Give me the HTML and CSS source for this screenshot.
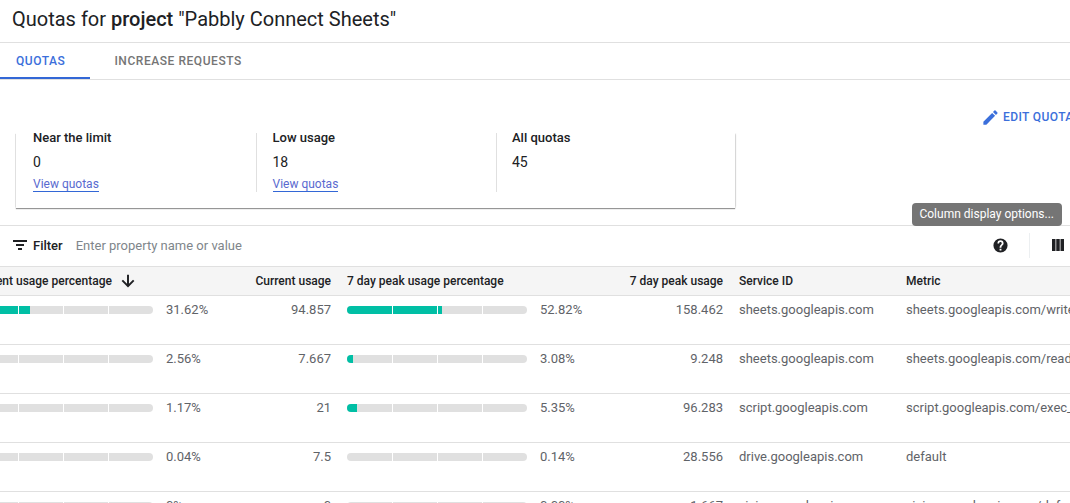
FILE: index.html
```html
<!DOCTYPE html>
<html lang="en">
<head>
<meta charset="utf-8">
<title>Quotas</title>
<link rel="stylesheet" href="styles.css">
</head>
<body>
<h1 class="title">Quotas for <strong>project</strong> "Pabbly Connect Sheets"</h1>
<nav class="tabs">
  <a class="tab tab-active">QUOTAS</a>
  <a class="tab">INCREASE REQUESTS</a>
</nav>
<div class="actions">
  <a class="edit">
    <svg class="edit-icon" viewBox="0 0 24 24"><path fill="currentColor" d="M3 17.25V21h3.75L17.81 9.94l-3.75-3.75L3 17.25zM20.71 7.04a1 1 0 0 0 0-1.41l-2.34-2.34a1 1 0 0 0-1.41 0l-1.83 1.83 3.75 3.75 1.83-1.83z"/></svg>
    EDIT QUOTAS
  </a>
</div>
<section class="summary">
  <div class="stat">
    <div class="stat-label">Near the limit</div>
    <div class="stat-value">0</div>
    <a class="stat-link">View quotas</a>
  </div>
  <div class="stat">
    <div class="stat-label">Low usage</div>
    <div class="stat-value">18</div>
    <a class="stat-link">View quotas</a>
  </div>
  <div class="stat stat-last">
    <div class="stat-label">All quotas</div>
    <div class="stat-value">45</div>
  </div>
</section>
<div class="filter">
  <svg class="filter-icon" viewBox="0 0 14 10"><path fill="currentColor" d="M0 0h14v2H0zM3 4h8v2H3zM5 8h4v2H5z"/></svg>
  <span class="filter-label">Filter</span>
  <span class="filter-hint">Enter property name or value</span>
  <svg class="help-icon" viewBox="0 0 24 24"><path fill="currentColor" d="M12 2a10 10 0 1 0 0 20 10 10 0 0 0 0-20zm1.3 17h-2.6v-2.5h2.6V19zm1.9-7.6-.9.9c-.8.8-1 1.3-1 2.7h-2.6v-.6c0-1.1.45-2.1 1.17-2.83l1.24-1.26A1.9 1.9 0 1 0 10 9H7.7a4.3 4.3 0 1 1 8.6 0c0 .9-.5 1.8-1.1 2.4z"/></svg>
  <span class="filter-sep"></span>
  <svg class="cols-icon" viewBox="0 0 12 12"><path fill="currentColor" d="M0 0h3.5v12H0zM4.25 0h3.5v12h-3.5zM8.5 0H12v12H8.5z"/></svg>
  <div class="tooltip">Column display options...</div>
</div>
<div class="table">
  <div class="row row-head">
    <div class="head-sort">Current usage percentage
      <svg class="sort-icon" viewBox="0 0 24 24"><path fill="currentColor" d="M20.5 12l-1.8-1.8-5.4 5.4V3.5h-2.6v12.1l-5.4-5.4L3.5 12l8.5 8.5 8.5-8.5z"/></svg>
    </div>
    <div class="num">Current usage</div>
    <div>7 day peak usage percentage</div>
    <div class="num">7 day peak usage</div>
    <div>Service ID</div>
    <div>Metric</div>
  </div>
  <div class="row">
    <div class="usage"><div class="bar"><div class="bar-fill" style="width:31.62%"></div></div><span>31.62%</span></div>
    <div class="num">94.857</div>
    <div class="usage"><div class="bar"><div class="bar-fill" style="width:52.82%"></div></div><span>52.82%</span></div>
    <div class="num">158.462</div>
    <div>sheets.googleapis.com</div>
    <div>sheets.googleapis.com/write_requests</div>
  </div>
  <div class="row">
    <div class="usage"><div class="bar"><div class="bar-fill" style="width:2.56%"></div></div><span>2.56%</span></div>
    <div class="num">7.667</div>
    <div class="usage"><div class="bar"><div class="bar-fill" style="width:3.08%"></div></div><span>3.08%</span></div>
    <div class="num">9.248</div>
    <div>sheets.googleapis.com</div>
    <div>sheets.googleapis.com/read_requests</div>
  </div>
  <div class="row">
    <div class="usage"><div class="bar"><div class="bar-fill" style="width:1.17%"></div></div><span>1.17%</span></div>
    <div class="num">21</div>
    <div class="usage"><div class="bar"><div class="bar-fill" style="width:5.35%"></div></div><span>5.35%</span></div>
    <div class="num">96.283</div>
    <div>script.googleapis.com</div>
    <div>script.googleapis.com/exec_requests</div>
  </div>
  <div class="row">
    <div class="usage"><div class="bar"></div><span>0.04%</span></div>
    <div class="num">7.5</div>
    <div class="usage"><div class="bar"></div><span>0.14%</span></div>
    <div class="num">28.556</div>
    <div>drive.googleapis.com</div>
    <div>default</div>
  </div>
  <div class="row">
    <div class="usage"><div class="bar"></div><span>0%</span></div>
    <div class="num">0</div>
    <div class="usage"><div class="bar"></div><span>0.00%</span></div>
    <div class="num">1.667</div>
    <div>vision.googleapis.com</div>
    <div>vision.googleapis.com/default</div>
  </div>
</div>
</body>
</html>
```
FILE: styles.css
```css
html, body {
  margin: 0;
  height: 503px;
  overflow: hidden;
  background: #fff;
}
body {
  font-family: Roboto, "Liberation Sans", sans-serif;
  font-size: 13px;
  color: #202124;
}
.title {
  margin: 0;
  height: 43px;
  padding-left: 12px;
  box-sizing: border-box;
  font-size: 20px;
  font-weight: 400;
  line-height: 39px;
  border-bottom: 1px solid #e0e0e0;
}
.title strong { font-weight: 500; }
.tabs {
  display: flex;
  height: 37px;
  box-sizing: border-box;
  border-bottom: 1px solid #e0e0e0;
}
.tab {
  font-size: 12px;
  font-weight: 500;
  line-height: 36px;
  letter-spacing: 0.55px;
  color: #757575;
  padding: 0 24px;
}
.tab:first-child { padding: 0 25px 0 16px; }
.tab-active {
  color: #3b6fdb;
  height: 36px;
  box-sizing: border-box;
  border-bottom: 2px solid #3367d6;
}
.actions {
  height: 53px;
  box-sizing: border-box;
  display: flex;
  padding: 28px 0 0 981px;
  white-space: nowrap;
}
.edit {
  display: flex;
  align-items: center;
  gap: 3px;
  height: 18px;
  font-size: 12px;
  font-weight: 500;
  letter-spacing: 0.4px;
  color: #3b6fdb;
}
.edit-icon { width: 19px; height: 19px; flex: none; }
.summary {
  display: flex;
  width: 719px;
  height: 75px;
  margin-left: 16px;
  box-sizing: border-box;
  background: #fff;
  box-shadow: 0 1px 1px rgba(0,0,0,.4), 1px 0 2px -1px rgba(0,0,0,.3), -1px 0 1px -1px rgba(0,0,0,.35);
  clip-path: inset(0 -4px -4px -4px);
}
.stat {
  width: 240.5px;
  height: 59px;
  padding-left: 16px;
  box-sizing: border-box;
  border-right: 1px solid #e0e0e0;
}
.stat:first-child { padding-left: 17px; }
.stat-last { border-right: 0; padding-left: 15px; width: 238px; }
.stat-label {
  font-size: 13px;
  font-weight: 500;
  line-height: 10px;
  color: #202124;
}
.stat-value {
  font-size: 14px;
  line-height: 16px;
  margin-top: 11px;
}
.stat-link {
  display: inline-block;
  font-size: 12px;
  line-height: 14px;
  margin-top: 7px;
  color: #5a6acf;
  border-bottom: 1px solid #3367d6;
}
.filter {
  position: relative;
  display: flex;
  align-items: center;
  height: 41px;
  margin-top: 17px;
  box-sizing: border-box;
  border-top: 1px solid #e0e0e0;
  padding: 0 0 2px 13px;
}
.filter-icon { width: 14px; height: 10px; margin-right: 6px; flex: none; }
.filter-label { font-size: 13px; font-weight: 500; margin-right: 13px; }
.filter-hint { font-size: 13px; color: #80868b; }
.help-icon { width: 17px; height: 17px; margin-left: auto; flex: none; }
.filter-sep {
  width: 1px;
  height: 25px;
  background: #eceff1;
  margin: 0 22px 0 20px;
}
.cols-icon { width: 12px; height: 12px; margin-right: 6px; flex: none; }
.tooltip {
  position: absolute;
  right: 8px;
  top: -23px;
  height: 23px;
  padding: 0 8px 0 7.5px;
  border-radius: 4px;
  background: #757575;
  color: #fff;
  font-size: 12px;
  line-height: 22px;
  white-space: nowrap;
}
.table {
  margin-left: -27px;
  width: 1400px;
}
.row {
  display: grid;
  grid-template-columns: 240px 102px 250px 110px 151px 400px;
  column-gap: 16px;
  height: 49px;
  box-sizing: border-box;
  padding-top: 6px;
  border-bottom: 1px solid #e0e0e0;
  font-size: 13px;
  line-height: 16px;
  color: #5f6368;
  white-space: nowrap;
}
.row-head {
  height: 30px;
  padding-top: 0;
  align-items: center;
  background: #f5f5f5;
  border-top: 1px solid #e0e0e0;
  font-size: 12px;
  font-weight: 500;
  color: #202124;
}
.head-sort { display: flex; align-items: center; }
.sort-icon { width: 18px; height: 18px; margin-left: 7px; flex: none; }
.num { text-align: right; }
.usage { display: flex; align-items: center; height: 16px; }
.usage span { margin-left: 13px; }
.bar {
  position: relative;
  width: 180px;
  height: 8px;
  flex: none;
  border-radius: 4px;
  overflow: hidden;
  background: #e0e0e0;
}
.bar-fill { height: 100%; background: #00bfa5; }
.bar::after {
  content: "";
  position: absolute;
  inset: 0;
  background:
    linear-gradient(#fff, #fff) 44.5px 0 / 1px 100% no-repeat,
    linear-gradient(#fff, #fff) 89.5px 0 / 1px 100% no-repeat,
    linear-gradient(#fff, #fff) 134.5px 0 / 1px 100% no-repeat;
}
```
